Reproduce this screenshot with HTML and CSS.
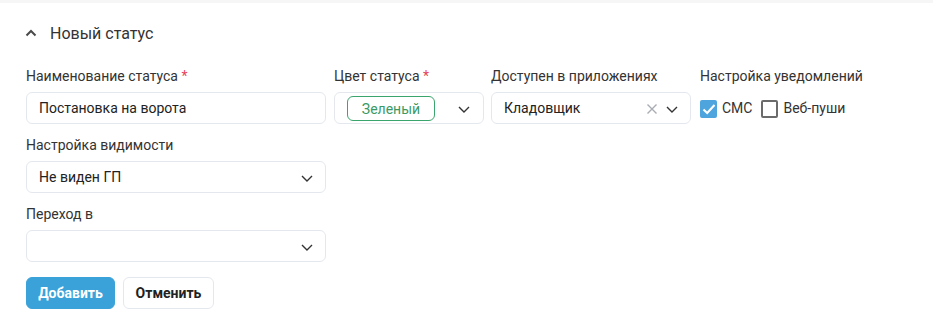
FILE: index.html
```html
<!DOCTYPE html>
<html lang="ru">
<head>
<meta charset="utf-8">
<link rel="stylesheet" href="styles.css">
</head>
<body>
<div class="topbar"></div>
<section class="panel">
  <div class="panel-head">
    <svg class="chev-up" width="12" height="8" viewBox="0 0 12 8"><path d="M1.5 6.5 L6 2 L10.5 6.5" fill="none" stroke="#4a4a4a" stroke-width="2"/></svg>
    <span class="panel-title">Новый статус</span>
  </div>
  <div class="row">
    <div class="field w300">
      <label class="label">Наименование статуса <span class="req">*</span></label>
      <div class="input">Постановка на ворота</div>
    </div>
    <div class="field w150">
      <label class="label">Цвет статуса <span class="req">*</span></label>
      <div class="input select">
        <span class="badge">Зеленый</span>
        <svg class="chev" width="12" height="7" viewBox="0 0 12 7"><path d="M1 1 L6 6 L11 1" fill="none" stroke="#333" stroke-width="1.4"/></svg>
      </div>
    </div>
    <div class="field w200">
      <label class="label">Доступен в приложениях</label>
      <div class="input select">
        <span class="val">Кладовщик</span>
        <svg class="clear" width="10" height="10" viewBox="0 0 10 10"><path d="M0.5 0.5 L9.5 9.5 M9.5 0.5 L0.5 9.5" fill="none" stroke="#a8acb3" stroke-width="1.4"/></svg>
        <svg class="chev chev-tight" width="12" height="7" viewBox="0 0 12 7"><path d="M1 1 L6 6 L11 1" fill="none" stroke="#333" stroke-width="1.4"/></svg>
      </div>
    </div>
    <div class="field">
      <label class="label">Настройка уведомлений</label>
      <div class="checks">
        <span class="check checked"><svg width="18" height="18" viewBox="0 0 18 18"><path d="M3.5 9.5 L7.2 13 L14.5 5" fill="none" stroke="#fff" stroke-width="2"/></svg></span>
        <span class="check-text">СМС</span>
        <span class="check"></span>
        <span class="check-text">Веб-пуши</span>
      </div>
    </div>
  </div>
  <div class="field w300">
    <label class="label">Настройка видимости</label>
    <div class="input select">
      <span class="val">Не виден ГП</span>
      <svg class="chev" width="12" height="7" viewBox="0 0 12 7"><path d="M1 1 L6 6 L11 1" fill="none" stroke="#333" stroke-width="1.4"/></svg>
    </div>
  </div>
  <div class="field w300">
    <label class="label">Переход в</label>
    <div class="input select">
      <span class="val"></span>
      <svg class="chev" width="12" height="7" viewBox="0 0 12 7"><path d="M1 1 L6 6 L11 1" fill="none" stroke="#333" stroke-width="1.4"/></svg>
    </div>
  </div>
  <div class="actions">
    <button class="btn btn-primary">Добавить</button>
    <button class="btn btn-default">Отменить</button>
  </div>
</section>
</body>
</html>
```
FILE: styles.css
```css
* { box-sizing: border-box; }
html, body { margin: 0; padding: 0; background: #fff; }
body {
  font-family: Roboto, "Liberation Sans", Arial, sans-serif;
  color: #333;
  font-size: 14px;
}
.topbar {
  height: 3px;
  background: #f6f6f7;
}
.panel {
  padding: 21px 0 0 26px;
}
.panel-head {
  display: flex;
  align-items: center;
  height: 20px;
}
.chev-up { margin-left: -1px; margin-right: 13px; margin-top: -2px; }
.panel-title {
  font-size: 16px;
  color: #333;
  line-height: 20px;
}
.row {
  display: flex;
  align-items: flex-start;
}
.row .field.w300 { margin-right: 8px; }
.row .field.w150 { margin-right: 7px; }
.row .field.w200 { margin-right: 9px; }
.field {
  margin-top: 24px;
  display: flex;
  flex-direction: column;
}
.panel > .field { margin-top: 13px; }
.w300 { width: 300px; }
.w150 { width: 150px; }
.w200 { width: 200px; }
.label {
  font-size: 14px;
  line-height: 17px;
  height: 17px;
  margin-bottom: 7px;
  color: #333;
  white-space: nowrap;
}
.req { color: #e5455a; }
.input {
  height: 32px;
  border: 1px solid #e4e8ee;
  border-radius: 6px;
  padding: 0 12px;
  display: flex;
  align-items: center;
  font-size: 14px;
  color: #222;
}
.select .val { flex: 1; }
.badge {
  border: 1px solid #3aa56c;
  color: #3c9a64;
  border-radius: 6px;
  height: 25px;
  width: 88px;
  display: flex;
  align-items: center;
  justify-content: center;
  font-size: 14px;
  margin-top: 1px;
}
.select .badge + .chev { margin-left: auto; margin-right: 1px; margin-top: 3px; }
.chev { margin-left: auto; margin-top: 3px; }
.clear { margin-right: 9px; margin-top: 1px; }
.chev-tight { margin-left: 0; margin-right: 0; }
.checks {
  display: flex;
  align-items: center;
  height: 32px;
}
.check {
  width: 17px;
  height: 18px;
  border: 2px solid #6b6b6b;
  border-radius: 2px;
  display: inline-flex;
  align-items: center;
  justify-content: center;
  background: #fff;
  margin-top: 1px;
}
.check.checked {
  background: #4ea5dd;
  border-color: #4ea5dd;
}
.check.checked svg { flex: none; }
.check-text {
  margin-left: 5px;
  margin-right: 9px;
  font-size: 14px;
  color: #333;
}
.actions {
  display: flex;
  margin-top: 15px;
}
.btn {
  height: 32px;
  font-family: Roboto, "Liberation Sans", Arial, sans-serif;
  font-size: 14px;
  font-weight: 700;
  border-radius: 6px;
  padding: 0;
  cursor: pointer;
}
.btn-primary {
  width: 89px;
  background: #3aa2d9;
  border: 1px solid #3aa2d9;
  color: #fff;
  margin-right: 8px;
}
.btn-default {
  width: 91px;
  background: #fff;
  border: 1px solid #e4e8ee;
  color: #222;
}
```
